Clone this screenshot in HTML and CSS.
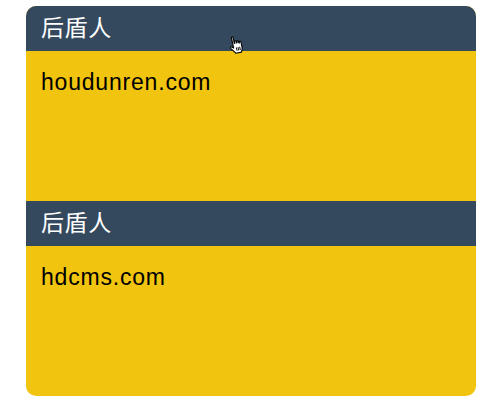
FILE: index.html
```html
<!DOCTYPE html>
<html lang="zh">
<head>
<meta charset="utf-8">
<link rel="stylesheet" href="styles.css">
</head>
<body>
<div class="card">
  <section class="item">
    <h2 class="title">后盾人</h2>
    <div class="content">houdunren.com</div>
  </section>
  <section class="item">
    <h2 class="title">后盾人</h2>
    <div class="content">hdcms.com</div>
  </section>
</div>
<svg class="cursor" width="18" height="19" viewBox="0 0 16 17">
  <g transform="rotate(-12 8 9)">
  <path d="M4.5 1.5 C4.5 0.8 6 0.8 6 1.5 L6 7 L6.5 7 L6.5 5.5 C6.5 4.8 8 4.8 8 5.5 L8 7 L8.5 7 L8.5 6 C8.5 5.3 10 5.3 10 6 L10 7.5 L10.5 7.5 L10.5 6.8 C10.5 6.1 12 6.1 12 6.8 L12 12 C12 14 11 15 10.5 16 L5.5 16 C5 15 3.5 13 2 11 C1.3 10 2.3 9 3.2 9.8 L4.5 11 Z" fill="#fff" stroke="#000" stroke-width="1" stroke-linejoin="round"/>
  <path d="M7 11 V14 M8.5 11 V14 M10 11 V14" stroke="#000" stroke-width="0.8"/>
  </g>
</svg>
</body>
</html>
```
FILE: styles.css
```css
html, body {
  margin: 0;
  padding: 0;
  background: #ffffff;
}
body {
  padding: 6px 25px 0 26px;
  font-family: "Liberation Sans", "Noto Sans CJK SC", sans-serif;
}
.card {
  width: 450px;
  border-radius: 10px;
  overflow: hidden;
}
.item {
  height: 195px;
  background: #f1c40f;
  display: flex;
  flex-direction: column;
}
.title {
  margin: 0;
  height: 45px;
  line-height: 45px;
  padding: 0 15px;
  background: #34495e;
  color: #ffffff;
  font-size: 23px;
  letter-spacing: 0.6px;
  font-weight: normal;
}
.content {
  padding: 18px 15px;
  font-size: 23px;
  line-height: 26px;
  letter-spacing: 0.8px;
  color: #000;
}
.cursor {
  position: absolute;
  left: 228px;
  top: 35px;
}
```
